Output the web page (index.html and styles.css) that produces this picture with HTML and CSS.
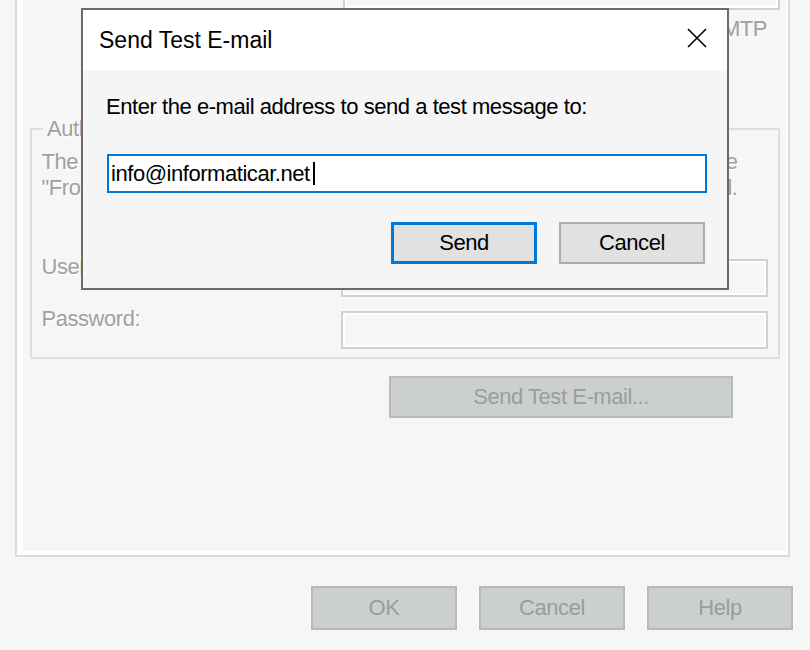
FILE: index.html
```html
<!DOCTYPE html>
<html lang="en">
<head>
  <meta charset="UTF-8" />
  <title>Send Test E-mail</title>
  <link rel="stylesheet" href="styles.css">
</head>
<body>
  <div class="screen">
    <div class="tab-page">
      <div class="field top-field"></div>
      <p class="note">used to send e-mail via SMTP</p>

      <fieldset class="group">
        <legend>Authentication</legend>
        <div class="group-text">
          <p><span>The</span><span>user name and password of the</span></p>
          <p><span>"From"</span><span>account to send e-mail.</span></p>
        </div>
        <div class="row first">
          <label>User name:</label>
          <div class="field"></div>
        </div>
        <div class="row">
          <label>Password:</label>
          <div class="field"></div>
        </div>
      </fieldset>

      <button class="btn btn-off btn-wide" disabled>Send Test E-mail...</button>
    </div>

    <div class="footer">
      <button class="btn btn-off" disabled>OK</button>
      <button class="btn btn-off" disabled>Cancel</button>
      <button class="btn btn-off" disabled>Help</button>
    </div>

    <!-- modal dialog over the properties page -->
    <div class="dialog">
      <div class="dialog-head">
        <span class="dialog-title">Send Test E-mail</span>
        <svg class="close" viewBox="0 0 20 20">
          <path d="M1 1L19 19M19 1L1 19" stroke="#000" stroke-width="1.6" fill="none" />
        </svg>
      </div>
      <div class="dialog-body">
        <p class="prompt">Enter the e-mail address to send a test message to:</p>
        <div class="email"><span>info@informaticar.net<span class="caret"></span></span></div>
        <div class="actions">
          <button class="btn btn-dlg btn-default">Send</button>
          <button class="btn btn-dlg">Cancel</button>
        </div>
      </div>
    </div>
  </div>
</body>
</html>
```

FILE: styles.css
```css
body {
  margin: 0;
  background: #f6f6f6;
  font-family: "Liberation Sans", Arial, sans-serif;
  font-size: 22px;
  line-height: 26px;
  letter-spacing: -0.45px;
  color: #000;
}

.screen {
  position: relative;
  width: 810px;
  height: 650px;
  overflow: hidden;
}

/* page behind the dialog */
.tab-page {
  display: flow-root;
  box-sizing: border-box;
  width: 775px;
  height: 557px;
  margin-left: 15px;
  border: 2px solid #dcdcdc;
  border-top: 0;
  box-shadow: inset 6px 0 0 #fff, inset -2px -4px 0 #fff;
}

.field {
  box-sizing: border-box;
  height: 38px;
  border: 2px solid #cfd3cf;
  box-shadow: inset 0 0 0 2px #fff;
  background: #f6f6f6;
}

.top-field {
  width: 437px;
  margin: -28px 0 0 326px;
}

.note {
  margin: 6px 21px 0 0;
  text-align: right;
  color: #a0a0a0;
}

.group {
  box-sizing: border-box;
  width: 750px;
  min-width: 0;
  margin: 74px 0 0 13px;
  padding: 7px 10px 8px 9.5px;
  border: 2px solid #dcdfdd;
}

.group legend {
  margin-left: 1.5px;
  padding: 0 4px;
  color: #a0a0a0;
  text-shadow: 1px 1px 0 #fff;
}

.group-text {
  width: 696px;
  color: #a0a0a0;
  text-shadow: 1px 1px 0 #fff;
}

.group-text p {
  display: flex;
  justify-content: space-between;
  margin: 0;
}

.row {
  display: flex;
  margin-top: 14px;
}

.row.first {
  margin-top: 58px;
}

.row label {
  width: 299.5px;
  margin-top: -5px;
  color: #a0a0a0;
  text-shadow: 1px 1px 0 #fff;
}

.row .field {
  width: 427px;
}

.btn {
  box-sizing: border-box;
  width: 146px;
  height: 44px;
  padding: 0;
  font: inherit;
  letter-spacing: inherit;
}

.btn-off {
  background: #ccd0cc;
  border: 2px solid #b8bbb8;
  color: #9c9c9c;
}

.btn-wide {
  display: block;
  width: 344px;
  height: 42px;
  margin: 17px 0 0 372px;
}

.footer {
  display: flex;
  justify-content: flex-end;
  gap: 22px;
  margin-top: 29px;
  padding-right: 17px;
}

/* Send Test E-mail dialog */
.dialog {
  position: absolute;
  left: 81px;
  top: 8px;
  width: 648px;
  height: 282px;
  box-sizing: border-box;
  border: 2px solid #6b6b6b;
  background: #f5f5f5;
}

.dialog-head {
  display: flex;
  justify-content: space-between;
  height: 60px;
  padding: 0 20px 0 16px;
  background: #fff;
}

.dialog-title {
  margin-top: 17px;
  font-size: 23px;
  letter-spacing: 0;
}

.close {
  width: 20px;
  height: 20px;
  margin-top: 18px;
}

.dialog-body {
  padding: 24px 0 0 23px;
}

.prompt {
  margin: 0;
}

.email {
  display: flex;
  align-items: center;
  box-sizing: border-box;
  width: 600px;
  height: 39px;
  margin: 34px 0 0 1px;
  padding-left: 2px;
  border: 2px solid #0078d7;
  background: #fff;
}

.caret {
  display: inline-block;
  width: 2px;
  height: 23px;
  margin-left: 3px;
  vertical-align: -4px;
  background: #000;
}

.actions {
  display: flex;
  justify-content: flex-end;
  gap: 22px;
  width: 599px;
  margin-top: 29px;
}

.btn-dlg {
  height: 42px;
  background: #e1e1e1;
  border: 2px solid #adadad;
  color: #000;
}

.btn-default {
  border: 3px solid #0078d7;
}
```
